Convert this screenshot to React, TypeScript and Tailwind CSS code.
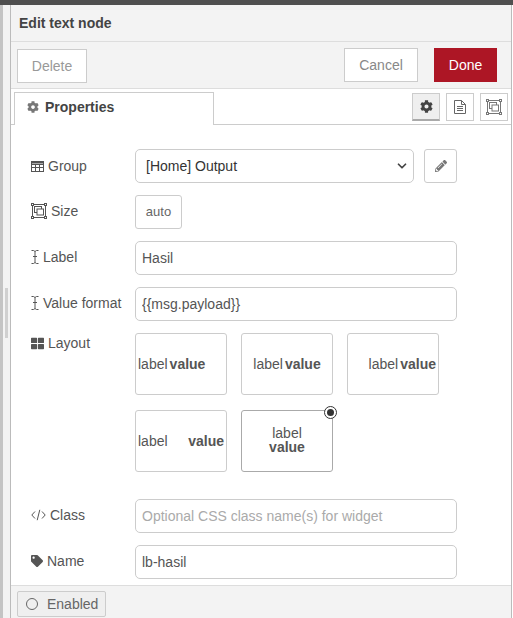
import type { ReactNode } from 'react';
import { FaCog, FaPencilAlt, FaTag, FaThLarge } from 'react-icons/fa';
import { ChevronDown } from 'lucide-react';

const font = { fontFamily: '"Liberation Sans", Arial, sans-serif' };

function SizeIcon({ size = 16 }: { size?: number }) {
  return (
    <svg width={size} height={size} viewBox="0 0 16 16" fill="none" stroke="currentColor" strokeWidth="1">
      <rect x="1.5" y="1.5" width="13" height="13" />
      <rect x="3.5" y="3.5" width="7" height="6" fill="white" />
      <rect x="6" y="6" width="6.5" height="6" fill="white" />
      <rect x="0.5" y="0.5" width="2" height="2" fill="white" />
      <rect x="13.5" y="0.5" width="2" height="2" fill="white" />
      <rect x="0.5" y="13.5" width="2" height="2" fill="white" />
      <rect x="13.5" y="13.5" width="2" height="2" fill="white" />
    </svg>
  );
}

function TableIcon() {
  return (
    <svg width="13" height="11" viewBox="0 0 13 11" fill="none" stroke="#555" strokeWidth="1">
      <rect x="0.5" y="0.5" width="12" height="10" />
      <path d="M0 3.5h13M0 6.5h13M4.5 3v8M8.5 3v8" />
      <path d="M0 1.5h13" strokeWidth="2" />
    </svg>
  );
}

function CursorIcon() {
  return (
    <svg width="8" height="14" viewBox="0 0 8 14" fill="none" stroke="#555" strokeWidth="1">
      <path d="M0.5 0.5h2l1.5 1 1.5-1h2M4 1.5v11M2 6.5h4M0.5 13.5h2l1.5-1 1.5 1h2" />
    </svg>
  );
}

function FileIcon() {
  return (
    <svg width="12" height="14" viewBox="0 0 12 14" fill="none" stroke="#666" strokeWidth="1">
      <path d="M0.5 0.5h7l4 4v9h-11zM7.5 0.5v4h4" />
      <path d="M3 6.5h6M3 8.5h6M3 10.5h6" />
    </svg>
  );
}

function CodeIcon() {
  return (
    <svg width="15" height="12" viewBox="0 0 15 12" fill="none" stroke="#555" strokeWidth="1">
      <path d="M4 2.5L0.8 6L4 9.5M11 2.5L14.2 6L11 9.5M8.8 0.8L6.2 11.2" />
    </svg>
  );
}

function FormRow({ icon, label, raised = true, children }: { icon: ReactNode; label: string; raised?: boolean; children: ReactNode }) {
  return (
    <div className="mb-3 flex h-[34px] items-center">
      <div className={`flex w-[104px] items-center gap-1 text-sm text-[#555] ${raised ? 'pb-[2px]' : ''}`}>
        {icon}
        {label}
      </div>
      {children}
    </div>
  );
}

function LayoutBox({ className, children, selected }: { className: string; children: ReactNode; selected?: boolean }) {
  return (
    <div
      className={`relative flex h-[62px] w-[92px] rounded-[3px] border px-[2px] text-sm text-[#555] ${selected ? 'border-[#aaa]' : 'border-[#ccc]'} ${className}`}
    >
      {children}
      {selected && (
        <span className="absolute -right-[5px] -top-[5px] flex h-[13px] w-[13px] items-center justify-center rounded-full border border-[#333] bg-white">
          <span className="h-[7px] w-[7px] rounded-full bg-[#333]" />
        </span>
      )}
    </div>
  );
}

const inputClass =
  'h-[34px] w-[322px] rounded-[5px] border border-[#ccc] bg-white px-[6px] text-sm text-[#555] outline-none placeholder:text-[#aaa]';

export default function App() {
  return (
    <div className="flex h-[618px] w-[513px] flex-col overflow-hidden bg-white" style={font}>
      <div className="h-[5px] shrink-0 bg-[#4f4f4f]" />
      <div className="flex min-h-0 flex-1">
        <div className="flex w-[10px] shrink-0 bg-[#f3f3f3]">
          <div className="w-[3px] bg-[#c4c4c4]" />
          <div className="mt-[283px] ml-[2px] h-[50px] w-[3px] bg-[#d0d0d0]" />
        </div>
        <div className="flex w-[502px] min-w-0 flex-col border-x border-x-[#bbb]">
          <div className="flex h-[37px] shrink-0 items-center border-b border-[#ddd] bg-[#f3f3f3] pl-2 text-sm font-bold text-[#444]">
            Edit text node
          </div>
          <div className="flex h-[47px] shrink-0 items-center justify-between border-b border-[#ddd] bg-[#f3f3f3] pl-[6px] pr-[14px]">
            <button type="button" className="mt-[1px] h-[34px] w-[70px] border border-[#ccc] bg-white text-sm text-[#999]">
              Delete
            </button>
            <div className="flex gap-[16px]">
              <button type="button" className="h-[34px] w-[74px] border border-[#ccc] bg-white text-sm text-[#888]">
                Cancel
              </button>
              <button type="button" className="h-[34px] w-[63px] bg-[#ad1625] text-sm text-white">
                Done
              </button>
            </div>
          </div>
          <div className="flex h-[36px] shrink-0 items-end justify-between border-b border-[#ccc] pl-[3px] pr-[3px]">
            <div className="-mb-px flex h-[33px] w-[200px] items-center gap-[6px] border border-b-0 border-[#ccc] bg-white pb-1 pl-3 text-sm font-bold text-[#444]">
              <FaCog size={12} color="#777" />
              Properties
            </div>
            <div className="mb-[3px] flex gap-[6px]">
              <div className="flex h-7 w-7 items-center justify-center border border-[#ccc] border-b-2 border-b-[#aaa] bg-[#efefef]">
                <FaCog size={13} color="#444" />
              </div>
              <div className="flex h-7 w-7 items-center justify-center border border-[#ccc]">
                <FileIcon />
              </div>
              <div className="flex h-7 w-7 items-center justify-center border border-[#ccc] text-[#777]">
                <SizeIcon />
              </div>
            </div>
          </div>
          <div className="min-h-0 flex-1 overflow-hidden pl-5 pt-6">
            <FormRow icon={<TableIcon />} label="Group" raised={false}>
              <div className="flex h-[34px] w-[279px] items-center justify-between rounded-[5px] border border-[#ccc] pl-[10px] pr-[4px] text-sm text-[#333]">
                [Home] Output
                <ChevronDown size={14} strokeWidth={3} className="text-[#444]" />
              </div>
              <button type="button" className="ml-[10px] flex h-[34px] w-[33px] items-center justify-center rounded-[3px] border border-[#ccc]">
                <FaPencilAlt size={12} color="#777" />
              </button>
            </FormRow>
            <FormRow icon={<span className="text-[#555]"><SizeIcon /></span>} label="Size">
              <div className="flex h-[34px] w-[47px] items-center justify-center rounded-[3px] border border-[#ccc] text-[13px] text-[#666]">auto</div>
            </FormRow>
            <FormRow icon={<CursorIcon />} label="Label">
              <input className={inputClass} defaultValue="Hasil" />
            </FormRow>
            <FormRow icon={<CursorIcon />} label="Value format">
              <input className={inputClass} defaultValue="{{msg.payload}}" />
            </FormRow>
            <div className="flex items-start">
              <div className="flex w-[104px] items-center gap-1 text-sm text-[#555]">
                <FaThLarge size={13} color="#555" />
                Layout
              </div>
              <div className="grid grid-cols-[92px_92px_92px] gap-x-[14px] gap-y-[15px]">
                <LayoutBox className="items-center justify-start gap-[2px]">
                  <span>label</span>
                  <b>value</b>
                </LayoutBox>
                <LayoutBox className="items-center justify-center gap-[2px]">
                  <span>label</span>
                  <b>value</b>
                </LayoutBox>
                <LayoutBox className="items-center justify-end gap-[2px]">
                  <span>label</span>
                  <b>value</b>
                </LayoutBox>
                <LayoutBox className="items-center justify-between">
                  <span>label</span>
                  <b>value</b>
                </LayoutBox>
                <LayoutBox selected className="flex-col items-center justify-center pb-[2px] leading-[14px]">
                  <span>label</span>
                  <b>value</b>
                </LayoutBox>
              </div>
            </div>
            <div className="mt-[27px]">
              <FormRow icon={<CodeIcon />} label="Class">
                <input className={inputClass} placeholder="Optional CSS class name(s) for widget" />
              </FormRow>
              <FormRow icon={<FaTag size={12} color="#555" />} label="Name">
                <input className={inputClass} defaultValue="lb-hasil" />
              </FormRow>
            </div>
          </div>
          <div className="flex h-[33px] shrink-0 items-start border-t border-[#ddd] bg-[#f3f3f3] pl-[6px] pt-[5px]">
            <div className="flex h-[26px] w-[89px] items-center gap-[9px] rounded-[2px] border border-[#ccc] bg-[#efefef] pl-2 text-sm text-[#666]">
              <span className="h-[12px] w-[12px] rounded-full border border-[#666]" />
              Enabled
            </div>
          </div>
        </div>
      </div>
    </div>
  );
}
